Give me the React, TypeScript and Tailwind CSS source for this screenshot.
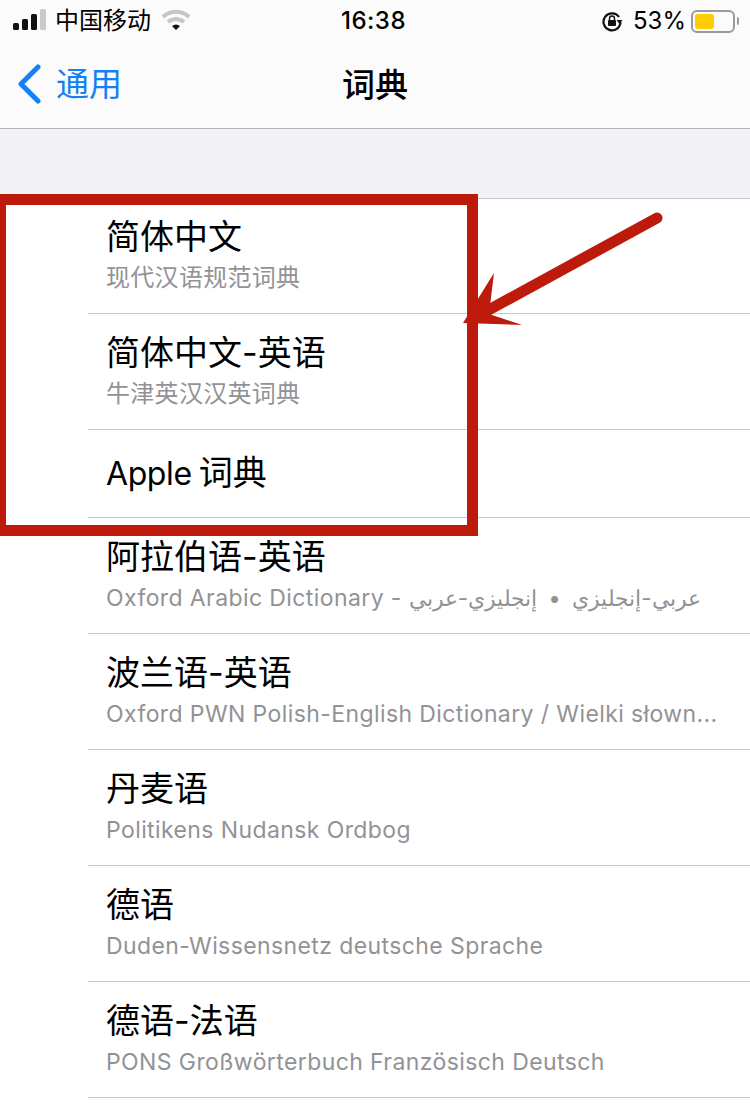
const cjk = "font-['Inter','Noto_Sans_CJK_SC',sans-serif]";

const arabic = "عربي-إنجليزي • إنجليزي-عربي";

const rows: { t: React.ReactNode; k: string; s?: React.ReactNode; h: string; subCls?: string }[] = [
  { k: "a", t: "简体中文", s: "现代汉语规范词典", h: "h-[115px]", subCls: "text-[24px] tracking-[0.3px]" },
  { k: "b", t: "简体中文-英语", s: "牛津英汉汉英词典", h: "h-[116px]", subCls: "text-[24px] tracking-[0.3px]" },
  {
    k: "c",
    t: (
      <>
        <span className="text-[32px] tracking-[-0.4px]">Apple</span>
        <span className="ml-[7px]">词典</span>
      </>
    ),
    h: "h-[88px]",
  },
  {
    k: "d",
    t: "阿拉伯语-英语",
    s: (
      <>
        Oxford Arabic Dictionary - <span className="text-[22.4px] tracking-normal [word-spacing:5px]">{arabic}</span>
      </>
    ),
    h: "h-[116px]",
  },
  { k: "e", t: "波兰语-英语", s: "Oxford PWN Polish-English Dictionary / Wielki słown...", h: "h-[116px]" },
  { k: "f", t: "丹麦语", s: "Politikens Nudansk Ordbog", h: "h-[116px]" },
  { k: "g", t: "德语", s: "Duden-Wissensnetz deutsche Sprache", h: "h-[116px]" },
  { k: "h", t: "德语-法语", s: "PONS Großwörterbuch Französisch Deutsch", h: "h-[116px]" },
];

export default function App() {
  return (
    <div className={`relative w-[750px] h-[1114px] overflow-hidden bg-white ${cjk}`}>
      <div className="bg-[#fbfbfb] h-[129px] border-b border-[#b4b4b6] flex flex-col">
        <div className="relative h-[40px] flex items-center pl-[13px] pr-[11px] text-black">
          <svg width="34" height="21" viewBox="0 0 34 21" className="mt-[-2px]">
            <rect x="0" y="14" width="6" height="7" rx="1.5" fill="#111" />
            <rect x="9" y="10" width="6" height="11" rx="1.5" fill="#111" />
            <rect x="18" y="5" width="6" height="16" rx="1.5" fill="#111" />
            <rect x="27" y="0" width="6" height="21" rx="1.5" fill="#c9c9c9" />
          </svg>
          <span className="ml-[8px] mt-[1px] text-[24px] leading-[28px]">中国移动</span>
          <svg width="30" height="22" viewBox="0 0 30 22" className="ml-[10px]">
            <path d="M2 8 A19 19 0 0 1 28 8" fill="none" stroke="#c6c6c6" strokeWidth="4" />
            <path d="M7 13 A12 12 0 0 1 23 13" fill="none" stroke="#c6c6c6" strokeWidth="4" />
            <path d="M11 17 Q15 14 19 17 L15 21 Z" fill="#111" />
          </svg>
          <span className="absolute left-[341px] top-[7px] text-[24px] leading-[28px] font-medium tracking-[0.5px]">16:38</span>
          <div className="ml-auto flex items-center mt-[2px]">
            <svg width="22" height="22" viewBox="0 0 22 22">
              <path d="M18 7 A8.5 8.5 0 1 0 19.5 12" fill="none" stroke="#111" strokeWidth="2.2" />
              <path d="M15.5 10 L21.5 10 L18.5 14 Z" fill="#111" />
              <rect x="7" y="10" width="8" height="6" rx="1" fill="#111" />
              <path d="M8.5 10 V8.5 A2.5 2.5 0 0 1 13.5 8.5 V10" fill="none" stroke="#111" strokeWidth="1.4" />
            </svg>
            <span className="ml-[10px] text-[24px] leading-[28px]">53%</span>
            <div className="ml-[5px] w-[44px] h-[23px] rounded-[6px] border-2 border-[#9a9a9a] p-[2px]">
              <div className="w-[19px] h-full rounded-[3px] bg-[#ffcc00]" />
            </div>
            <div className="ml-[2px] w-[2px] h-[8px] bg-[#9a9a9a] rounded-r-sm" />
          </div>
        </div>
        <div className="relative flex-1 flex items-center justify-center">
          <div className="absolute left-[16px] top-[24px] flex items-center">
            <svg width="26" height="40" viewBox="0 0 26 40">
              <path d="M22 3 L5 20 L22 37" fill="none" stroke="#1381f5" strokeWidth="5" strokeLinecap="round" strokeLinejoin="round" />
            </svg>
            <span className="ml-[14px] text-[33px] leading-[40px] text-[#1381f5]">通用</span>
          </div>
          <span className="text-[33px] leading-[40px] font-medium text-black mt-[2px]">词典</span>
        </div>
      </div>
      <div className="h-[69px] bg-[#f2f2f7]" />
      <div className="bg-white border-t border-[#c8c8cc]">
        {rows.map((r) => (
          <div key={r.k} className={`${r.h} pl-[88px]`}>
            <div className={`h-full border-b border-[#c8c8cc] pl-[18px] flex flex-col justify-center ${r.s ? "pb-[5px]" : ""}`}>
              <div className="text-[34px] leading-[44px] text-black">{r.t}</div>
              {r.s && (
                <div className={`mt-[5px] leading-[28px] text-[#929296] whitespace-nowrap ${r.subCls ?? "text-[23px] tracking-[0.4px]"}`}>
                  {r.s}
                </div>
              )}
            </div>
          </div>
        ))}
      </div>
      <div className="absolute left-0 top-[194px] w-[478px] h-[342px] border-[#bd1a0b] border-l-[6px] border-r-[11px] border-y-[11px]" />
      <svg className="absolute left-[460px] top-[200px]" width="210" height="135" viewBox="0 0 210 135">
        <path d="M197 18 L25 112" stroke="#bd1a0b" strokeWidth="11" strokeLinecap="round" fill="none" />
        <path d="M34 73 L3 123 L62 125 L29 114 Z" fill="#bd1a0b" />
      </svg>
    </div>
  );
}
